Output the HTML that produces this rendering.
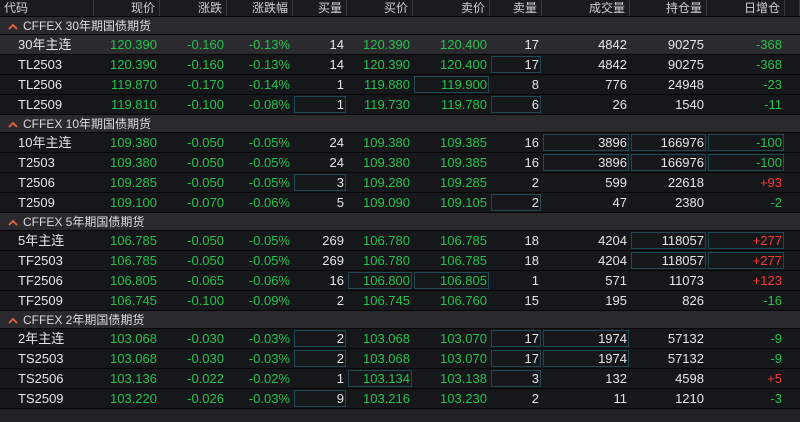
<!DOCTYPE html>
<html><head><meta charset="utf-8"><style>
*{margin:0;padding:0;box-sizing:border-box}
body{width:800px;height:422px;background:#222226;overflow:hidden;font-family:"Liberation Sans","Noto Sans CJK SC",sans-serif;color:#e6e6e6}
.r{display:flex;height:20px;background:#15171b;border-bottom:1px solid #050505;font-size:13px;line-height:19px}
.r.sel{background:#2b2b2f}
.r div{position:relative;text-align:right;padding-right:3px;white-space:nowrap}
.r div:first-child{text-align:left;padding-left:18px}
.h{display:flex;height:17px;background:#1b1b1f;border-bottom:1px solid #050505;font-size:12px;line-height:16px;color:#d0d0d0}
.h div{text-align:right;padding-right:4px;border-right:1px solid #3a3a3e}
.h div:first-child{text-align:left;padding-left:4px}
.g{height:18px;background:#2a2a2e;font-size:12px;line-height:18px;color:#dcdcdc;padding-left:8px;border-bottom:1px solid #050505}
.g svg{vertical-align:0;margin-right:5px}
.gr{color:#25c24d}.rd{color:#ff3535}
.b::after{content:"";position:absolute;left:1px;right:1px;top:1px;bottom:1px;border:1px solid #1d4a55}
.c1{width:94px}.c2{width:66px}.c3{width:67px}.c4{width:66px}.c5{width:54px}.c6{width:66px}.c7{width:77px}.c8{width:52px}.c9{width:88px}.c10{width:77px}.c11{width:78px}.c12{width:15px}
</style></head><body>
<div class="h"><div class="c1">代码</div><div class="c2">现价</div><div class="c3">涨跌</div><div class="c4">涨跌幅</div><div class="c5">买量</div><div class="c6">买价</div><div class="c7">卖价</div><div class="c8">卖量</div><div class="c9">成交量</div><div class="c10">持仓量</div><div class="c11">日增仓</div><div class="c12"></div></div>

<div class="g"><svg width="10" height="7" viewBox="0 0 10 7"><polyline points="1,6 5,2 9,6" fill="none" stroke="#e8643c" stroke-width="1.8"/></svg>CFFEX 30年期国债期货</div>
<div class="r sel"><div class="c1">30年主连</div><div class="c2 gr">120.390</div><div class="c3 gr">-0.160</div><div class="c4 gr">-0.13%</div><div class="c5">14</div><div class="c6 gr">120.390</div><div class="c7 gr">120.400</div><div class="c8">17</div><div class="c9">4842</div><div class="c10">90275</div><div class="c11 gr">-368</div></div>
<div class="r"><div class="c1">TL2503</div><div class="c2 gr">120.390</div><div class="c3 gr">-0.160</div><div class="c4 gr">-0.13%</div><div class="c5">14</div><div class="c6 gr">120.390</div><div class="c7 gr">120.400</div><div class="c8 b">17</div><div class="c9">4842</div><div class="c10">90275</div><div class="c11 gr">-368</div></div>
<div class="r"><div class="c1">TL2506</div><div class="c2 gr">119.870</div><div class="c3 gr">-0.170</div><div class="c4 gr">-0.14%</div><div class="c5">1</div><div class="c6 gr">119.880</div><div class="c7 gr b">119.900</div><div class="c8">8</div><div class="c9">776</div><div class="c10">24948</div><div class="c11 gr">-23</div></div>
<div class="r"><div class="c1">TL2509</div><div class="c2 gr">119.810</div><div class="c3 gr">-0.100</div><div class="c4 gr">-0.08%</div><div class="c5 b">1</div><div class="c6 gr">119.730</div><div class="c7 gr">119.780</div><div class="c8 b">6</div><div class="c9">26</div><div class="c10">1540</div><div class="c11 gr">-11</div></div>

<div class="g"><svg width="10" height="7" viewBox="0 0 10 7"><polyline points="1,6 5,2 9,6" fill="none" stroke="#e8643c" stroke-width="1.8"/></svg>CFFEX 10年期国债期货</div>
<div class="r"><div class="c1">10年主连</div><div class="c2 gr">109.380</div><div class="c3 gr">-0.050</div><div class="c4 gr">-0.05%</div><div class="c5">24</div><div class="c6 gr">109.380</div><div class="c7 gr">109.385</div><div class="c8">16</div><div class="c9 b">3896</div><div class="c10 b">166976</div><div class="c11 gr b">-100</div></div>
<div class="r"><div class="c1">T2503</div><div class="c2 gr">109.380</div><div class="c3 gr">-0.050</div><div class="c4 gr">-0.05%</div><div class="c5">24</div><div class="c6 gr">109.380</div><div class="c7 gr">109.385</div><div class="c8">16</div><div class="c9 b">3896</div><div class="c10 b">166976</div><div class="c11 gr b">-100</div></div>
<div class="r"><div class="c1">T2506</div><div class="c2 gr">109.285</div><div class="c3 gr">-0.050</div><div class="c4 gr">-0.05%</div><div class="c5 b">3</div><div class="c6 gr">109.280</div><div class="c7 gr">109.285</div><div class="c8">2</div><div class="c9">599</div><div class="c10">22618</div><div class="c11 rd">+93</div></div>
<div class="r"><div class="c1">T2509</div><div class="c2 gr">109.100</div><div class="c3 gr">-0.070</div><div class="c4 gr">-0.06%</div><div class="c5">5</div><div class="c6 gr">109.090</div><div class="c7 gr">109.105</div><div class="c8 b">2</div><div class="c9">47</div><div class="c10">2380</div><div class="c11 gr">-2</div></div>

<div class="g"><svg width="10" height="7" viewBox="0 0 10 7"><polyline points="1,6 5,2 9,6" fill="none" stroke="#e8643c" stroke-width="1.8"/></svg>CFFEX 5年期国债期货</div>
<div class="r"><div class="c1">5年主连</div><div class="c2 gr">106.785</div><div class="c3 gr">-0.050</div><div class="c4 gr">-0.05%</div><div class="c5">269</div><div class="c6 gr">106.780</div><div class="c7 gr">106.785</div><div class="c8">18</div><div class="c9">4204</div><div class="c10 b">118057</div><div class="c11 rd b">+277</div></div>
<div class="r"><div class="c1">TF2503</div><div class="c2 gr">106.785</div><div class="c3 gr">-0.050</div><div class="c4 gr">-0.05%</div><div class="c5">269</div><div class="c6 gr">106.780</div><div class="c7 gr">106.785</div><div class="c8">18</div><div class="c9">4204</div><div class="c10 b">118057</div><div class="c11 rd b">+277</div></div>
<div class="r"><div class="c1">TF2506</div><div class="c2 gr">106.805</div><div class="c3 gr">-0.065</div><div class="c4 gr">-0.06%</div><div class="c5">16</div><div class="c6 gr b">106.800</div><div class="c7 gr b">106.805</div><div class="c8">1</div><div class="c9">571</div><div class="c10">11073</div><div class="c11 rd">+123</div></div>
<div class="r"><div class="c1">TF2509</div><div class="c2 gr">106.745</div><div class="c3 gr">-0.100</div><div class="c4 gr">-0.09%</div><div class="c5">2</div><div class="c6 gr">106.745</div><div class="c7 gr">106.760</div><div class="c8">15</div><div class="c9">195</div><div class="c10">826</div><div class="c11 gr">-16</div></div>

<div class="g"><svg width="10" height="7" viewBox="0 0 10 7"><polyline points="1,6 5,2 9,6" fill="none" stroke="#e8643c" stroke-width="1.8"/></svg>CFFEX 2年期国债期货</div>
<div class="r"><div class="c1">2年主连</div><div class="c2 gr">103.068</div><div class="c3 gr">-0.030</div><div class="c4 gr">-0.03%</div><div class="c5 b">2</div><div class="c6 gr">103.068</div><div class="c7 gr">103.070</div><div class="c8 b">17</div><div class="c9 b">1974</div><div class="c10">57132</div><div class="c11 gr">-9</div></div>
<div class="r"><div class="c1">TS2503</div><div class="c2 gr">103.068</div><div class="c3 gr">-0.030</div><div class="c4 gr">-0.03%</div><div class="c5 b">2</div><div class="c6 gr">103.068</div><div class="c7 gr">103.070</div><div class="c8 b">17</div><div class="c9 b">1974</div><div class="c10">57132</div><div class="c11 gr">-9</div></div>
<div class="r"><div class="c1">TS2506</div><div class="c2 gr">103.136</div><div class="c3 gr">-0.022</div><div class="c4 gr">-0.02%</div><div class="c5">1</div><div class="c6 gr b">103.134</div><div class="c7 gr">103.138</div><div class="c8 b">3</div><div class="c9">132</div><div class="c10">4598</div><div class="c11 rd">+5</div></div>
<div class="r"><div class="c1">TS2509</div><div class="c2 gr">103.220</div><div class="c3 gr">-0.026</div><div class="c4 gr">-0.03%</div><div class="c5 b">9</div><div class="c6 gr">103.216</div><div class="c7 gr">103.230</div><div class="c8">2</div><div class="c9">11</div><div class="c10">1210</div><div class="c11 gr">-3</div></div>
</body></html>
